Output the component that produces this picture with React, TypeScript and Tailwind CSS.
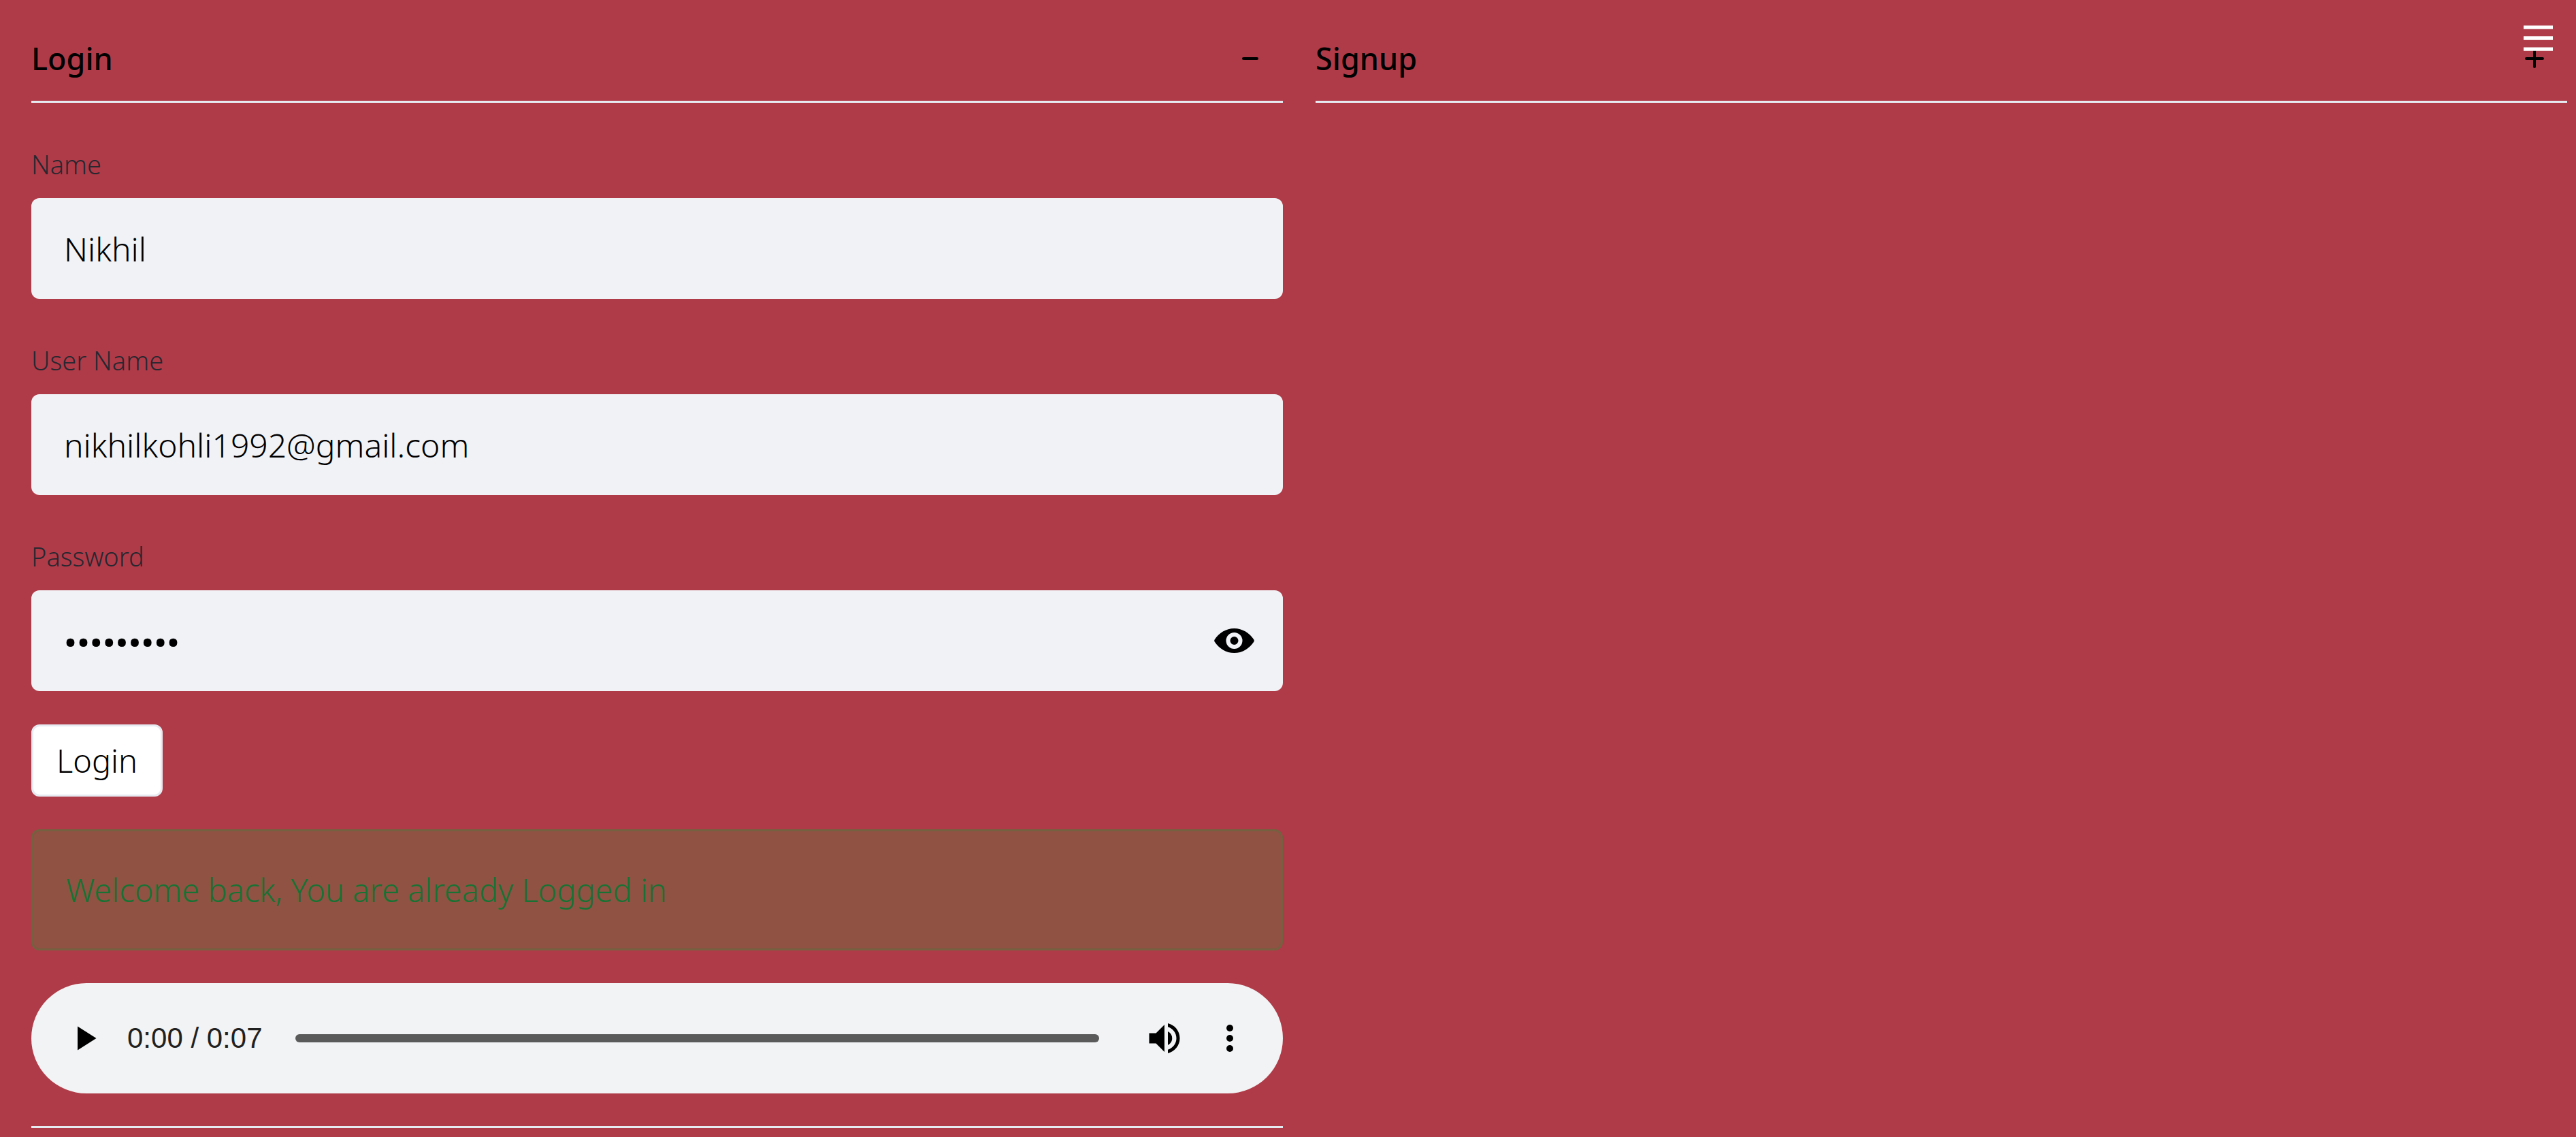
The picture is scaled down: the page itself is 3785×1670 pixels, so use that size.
import { useState } from "react";
import type { ReactNode } from "react";

function PlusIcon() {
  return (
    <svg className="size-12" viewBox="0 0 48 48" fill="none" stroke="currentColor" strokeWidth="4" strokeLinecap="round" aria-hidden="true">
      <path d="M12 24h24M24 12v24" />
    </svg>
  );
}

function MinusIcon() {
  return (
    <svg className="size-12" viewBox="0 0 48 48" fill="none" stroke="currentColor" strokeWidth="4" strokeLinecap="round" aria-hidden="true">
      <path d="M14 24h20" />
    </svg>
  );
}

function MenuIcon() {
  return (
    <svg className="size-[43px]" viewBox="0 0 8 8" fill="currentColor" aria-hidden="true">
      <path d="M0 1v1h8V1H0zm0 2.97v1h8v-1H0zm0 3v1h8v-1H0z" />
    </svg>
  );
}

function EyeIcon() {
  return (
    <svg className="h-9 w-[59px]" viewBox="0 0 59 36" aria-hidden="true">
      <path
        fillRule="evenodd"
        d="M29.5 0C17.500 0 7 6.800 .6 16.600Q-.2 18 .6 19.400C7 29.200 17.500 36 29.500 36S52 29.200 58.400 19.400Q59.200 18 58.400 16.600C52 6.800 41.500 0 29.500 0ZM29.500 6a12 12 0 1 1 0 24a12 12 0 0 1 0-24ZM29.500 12a6 6 0 1 0 0 12a6 6 0 0 0 0-12Z"
      />
    </svg>
  );
}

function Section({ title, open, onToggle, children }: { title: string; open: boolean; onToggle: () => void; children?: ReactNode }) {
  return (
    <section>
      <h2 className="pt-6">
        <button
          type="button"
          onClick={onToggle}
          aria-expanded={open}
          className="flex h-[127px] w-full items-center justify-between border-b-3 border-[#e6eaf1] pr-6 text-[45px] font-medium"
        >
          {title}
          {open ? <MinusIcon /> : <PlusIcon />}
        </button>
      </h2>
      {open && children}
    </section>
  );
}

function Field({ id, label, children }: { id: string; label: string; children: ReactNode }) {
  return (
    <div>
      <label htmlFor={id} className="block pt-15 pb-5 text-[38px] leading-15 text-[#262730]">
        {label}
      </label>
      <div className="flex h-[148px] items-center rounded-xl bg-[#f0f2f6]">{children}</div>
    </div>
  );
}

function AudioPlayer() {
  return (
    <div className="mt-12 flex h-[162px] items-center rounded-full bg-[#f1f3f4] px-12">
      <button type="button" aria-label="Play">
        <svg className="size-15" viewBox="0 0 24 24" aria-hidden="true">
          <path d="M8 5v14l11-7z" />
        </svg>
      </button>
      <span className="ml-[33px] font-['Liberation_Sans',sans-serif] text-[42px] text-[#212121]">0:00 / 0:07</span>
      <div role="progressbar" aria-label="Playback position" aria-valuenow={0} className="mr-[66px] ml-12 h-3 flex-1 rounded-full bg-[#5a5a5a]" />
      <button type="button" aria-label="Mute">
        <svg className="size-15" viewBox="0 0 24 24" aria-hidden="true">
          <path d="M3 9v6h4l5 5V4L7 9H3zm13.500 3A4.500 4.500 0 0 0 14 7.970v8.050c1.480-.730 2.500-2.250 2.500-4.020zM14 3.230v2.060c2.890.860 5 3.540 5 6.710s-2.110 5.850-5 6.710v2.060c4.010-.910 7-4.490 7-8.770s-2.990-7.860-7-8.770z" />
        </svg>
      </button>
      <button type="button" aria-label="More options" className="ml-9">
        <svg className="size-15" viewBox="0 0 24 24" aria-hidden="true">
          <circle cx="12" cy="6" r="2" />
          <circle cx="12" cy="12" r="2" />
          <circle cx="12" cy="18" r="2" />
        </svg>
      </button>
    </div>
  );
}

export default function App() {
  const [loginOpen, setLoginOpen] = useState(true);
  const [signupOpen, setSignupOpen] = useState(false);
  const [showPassword, setShowPassword] = useState(false);

  return (
    <div className="relative min-h-screen bg-[#b03b48] font-['Noto_Sans',sans-serif] text-[47px] leading-[72px] font-light text-black">
      <button type="button" aria-label="Menu" className="absolute top-8 right-[34px] z-10 text-white">
        <MenuIcon />
      </button>

      <main className="grid grid-cols-2 items-start gap-12 pr-[13px] pl-[46px]">
        <Section title="Login" open={loginOpen} onToggle={() => setLoginOpen(!loginOpen)}>
          <form className="border-b-3 border-[#e6eaf1] pb-12" onSubmit={(e) => e.preventDefault()}>
            <Field id="name" label="Name">
              <input id="name" type="text" defaultValue="Nikhil" className="h-full min-w-0 flex-1 px-12 text-[48px] outline-none" />
            </Field>
            <Field id="user-name" label="User Name">
              <input id="user-name" type="text" defaultValue="nikhilkohli1992@gmail.com" className="h-full min-w-0 flex-1 px-12 text-[48px] outline-none" />
            </Field>
            <Field id="password" label="Password">
              <input
                id="password"
                type={showPassword ? "text" : "password"}
                defaultValue="nikhil123"
                className="h-full min-w-0 flex-1 px-12 pt-2 font-['Roboto',sans-serif] text-[54px] font-medium outline-none"
              />
              <button type="button" aria-label="Show password" onClick={() => setShowPassword(!showPassword)} className="mr-[42px]">
                <EyeIcon />
              </button>
            </Field>
            <button type="submit" className="mt-[49px] block h-[106px] rounded-xl border-3 border-[#e6eaf1] bg-white px-[34px]">
              Login
            </button>
            <div role="alert" className="mt-12 rounded-xl border-3 border-[#75603f] bg-[#8f5243] px-12 py-[50px] text-[#177233]">
              Welcome back, You are already Logged in
            </div>
            <AudioPlayer />
          </form>
        </Section>
        <Section title="Signup" open={signupOpen} onToggle={() => setSignupOpen(!signupOpen)} />
      </main>
    </div>
  );
}
